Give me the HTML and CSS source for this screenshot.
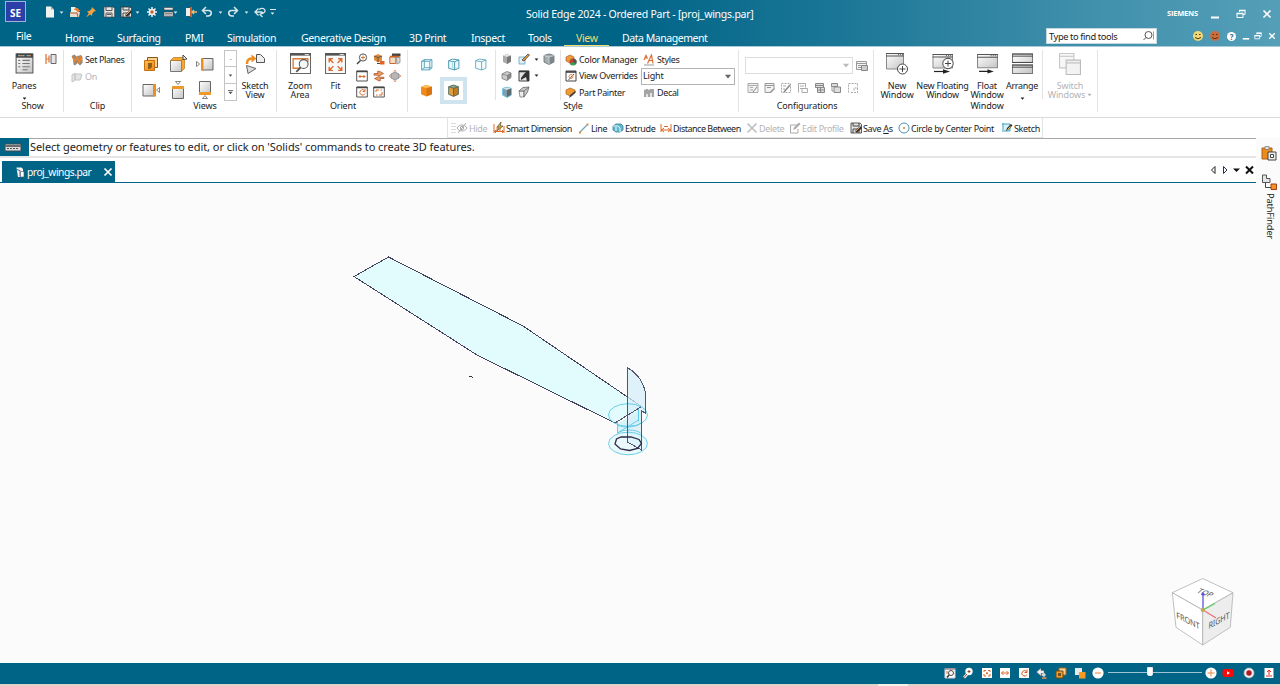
FILE: index.html
```html
<!DOCTYPE html>
<html lang="en">
<head>
<meta charset="utf-8">
<title>Solid Edge 2024</title>
<link rel="stylesheet" href="styles.css">
</head>
<body>
<svg class="sprite" aria-hidden="true">
<defs>
<linearGradient id="gr" x1="0" y1="0" x2="1" y2="1"><stop offset="0" stop-color="#fff"/><stop offset="1" stop-color="#c4c4c4"/></linearGradient>
<linearGradient id="or" x1="0" y1="0" x2="1" y2="1"><stop offset="0" stop-color="#ffc04a"/><stop offset="1" stop-color="#ee8610"/></linearGradient>
</defs>
<symbol id="caret" viewBox="0 0 6 4"><path d="M.5.5h5L3 3.5z" fill="currentColor"/></symbol>
<symbol id="doc" viewBox="0 0 12 12"><path d="M2 .5h5l3 3v8H2z" fill="#f1f1ee"/><path d="M7 .5v3h3z" fill="#9fb0b5"/></symbol>
<symbol id="open" viewBox="0 0 12 12"><path d="M2 1h4l3 3v4H2z" fill="#eee"/><path d="M1 6h10l-1 5H1z" fill="#e8dcd0"/><path d="M5 4c1-3 4-3 5 0h1.500L9 6.500 6.500 4z" fill="#f08030"/><path d="M1 7h7l1 4" stroke="#b25a30" fill="none"/></symbol>
<symbol id="pin" viewBox="0 0 12 12"><path d="M7 1l4 4-2 .5-2 2.500.2 2L5 8.500 1 11.500 3.800 7.300 2 5.200l2.300-.2L6.500 3z" fill="#f2a140"/></symbol>
<symbol id="save" viewBox="0 0 12 12"><path d="M1 1h9l1.500 1.500V11H1z" fill="#e9e7e3" stroke="#4a4a4a" stroke-width=".6"/><path d="M3 1v3.500h6V1M3 11V7h6v4M4 8.500h4" fill="none" stroke="#555"/></symbol>
<symbol id="saveas" viewBox="0 0 12 12"><path d="M1 1h9l1.500 1.500V11H1z" fill="#e9e7e3" stroke="#333" stroke-width=".8"/><path d="M3 1v3h6V1M3 11V7h6v4" fill="none" stroke="#444"/><path d="M5 9l5-5 2 2-5 5z" fill="#333"/><path d="M6 9l4-4" stroke="#eaa050"/></symbol>
<symbol id="gear" viewBox="0 0 12 12"><path d="M6 1v10M1 6h10M2.500 2.500l7 7M9.500 2.500l-7 7" stroke="#eee" stroke-width="1.500"/><circle cx="6" cy="6" r="3.300" fill="#eee"/><circle cx="6" cy="6" r="1.700" fill="#c06a30"/></symbol>
<symbol id="list" viewBox="0 0 12 12"><path d="M1 1.500h9v2.500H1zM1 6h9v4.500H1z" fill="#e8e8e8" stroke="#444" stroke-width=".6"/><path d="M2 7.500h7M2 9h7" stroke="#555" stroke-width=".7"/></symbol>
<symbol id="exit" viewBox="0 0 12 12"><path d="M1 2h5v8H1z" fill="#eee"/><path d="M5 1h2v10H5z" fill="#c6632c"/><path d="M12 6H7m2-2L7 6l2 2" stroke="#f6b877" stroke-width="1.300" fill="none"/></symbol>
<symbol id="undo" viewBox="0 0 12 12"><path d="M2 4.500h5.500c4 0 3.500 5.500-.5 5.500H5" fill="none" stroke="#d9e8ec" stroke-width="1.600"/><path d="M5 1L1.500 4.500 5 8" fill="none" stroke="#d9e8ec" stroke-width="1.500"/></symbol>
<symbol id="redo" viewBox="0 0 12 12"><path d="M10 4.500H4.500C.5 4.500 1 10 5 10h2" fill="none" stroke="#d9e8ec" stroke-width="1.600"/><path d="M7 1l3.500 3.500L7 8" fill="none" stroke="#d9e8ec" stroke-width="1.500"/></symbol>
<symbol id="undo2" viewBox="0 0 12 12"><path d="M1 6h7M4.500 2.500L1 6l3.500 3.500M5 3.500C10 .5 13 5 9.500 7L6 8.500M9 6L6 8.500 8.500 11" fill="none" stroke="#d9e8ec" stroke-width="1.300"/></symbol>
<symbol id="panes" viewBox="0 0 20 20"><path d="M2 1h16v18H2z" fill="url(#gr)" stroke="#555"/><path d="M2 .5h16v4H2z" fill="#444"/><path d="M4 2.500h2M8 2.500h2M12 2.500h2" stroke="#6bc3dd"/><path d="M6 2.500h2M14 2.500h2" stroke="#ec8840"/><path d="M4 7h2M4 10h2M4 13h2M8 7h7M8 10h7M8 13h7M8 16h5" stroke="#777"/></symbol>
<symbol id="dimbox" viewBox="0 0 12 12"><path d="M1 1v10M1 6h3M4 2.500v7" stroke="#e06d2e" fill="none" stroke-width="1.200"/><path d="M6 1.500h5v9H6z" fill="#e4e4e4" stroke="#666"/></symbol>
<symbol id="setplanes" viewBox="0 0 12 12"><path d="M.5 2l3-1.500 2 2L10 1l1.500 2v6L9 11.500 6.500 9 4 11.500l-1.500-1L2 5z" fill="#9c8774"/><path d="M1.500 3l2 4 3-4 1 6M8 9.500l1.500-6 1.500 4" stroke="#ee8428" stroke-width="1.400" fill="none"/></symbol>
<symbol id="onicon" viewBox="0 0 12 12"><path d="M1 4l3-2v7l-3 2zM4 3h6l1 1-2 5H4z" fill="#e4e4e4" stroke="#c4c4c4"/></symbol>
<symbol id="v1" viewBox="0 0 18 18"><path d="M5.500 2.500h10v10h-10z" fill="#ffd08a" stroke="#7a5a28"/><path d="M2.500 5.500h10v10h-10z" fill="url(#or)" stroke="#c87010"/><path d="M6 8h4v4l-2 2H6z" fill="#8c5e20"/></symbol>
<symbol id="v2" viewBox="0 0 18 18"><path d="M1.500 5.500h11v11h-11z" fill="url(#gr)" stroke="#777"/><path d="M1.500 5.500l3-3h11l-3 3zM12.500 5.500l3-3v11l-3 3z" fill="#f7a92f" stroke="#b7741a" stroke-width=".7"/><path d="M14 0l4 4-4 .5z" fill="#fff" stroke="#444"/></symbol>
<symbol id="v3" viewBox="0 0 18 18"><path d="M5.500 3.500h11.500v11.500H5.500z" fill="url(#gr)" stroke="#666"/><path d="M5 3h2.500V15.500H5z" fill="#ef8e20"/><path d="M.5 6.500v5l3-2.500z" fill="#fff" stroke="#666" stroke-width=".8"/></symbol>
<symbol id="v4" viewBox="0 0 18 18"><path d="M1 3.500h11.500v11.500H1z" fill="url(#gr)" stroke="#666"/><path d="M11 3h3V15.500h-3z" fill="#ef8e20"/><path d="M17.500 6.500v5l-3-2.500z" fill="#fff" stroke="#666" stroke-width=".8"/></symbol>
<symbol id="v5" viewBox="0 0 18 18"><path d="M3.500 6h11v11.500h-11z" fill="url(#gr)" stroke="#666"/><path d="M3 5h12v3H3z" fill="#ef9a28"/><path d="M6.500.5h5L9 3.500z" fill="#fff" stroke="#666" stroke-width=".8"/></symbol>
<symbol id="v6" viewBox="0 0 18 18"><path d="M3.500.5h11v12h-11z" fill="url(#gr)" stroke="#666"/><path d="M3 11h12v3H3z" fill="#ef9a28"/><path d="M6.500 17.500h5L9 14.500z" fill="#fff" stroke="#666" stroke-width=".8"/></symbol>
<symbol id="sketchview" viewBox="0 0 22 22"><path d="M12.500 1.500h4l4 4v4h-8z" fill="#eee" stroke="#555"/><path d="M3 11c0-5 2-5.500 6-5.500" stroke="#ef8e20" stroke-width="2.500" fill="none"/><path d="M7.500 1.500l5 4-5 4z" fill="#ef8e20"/><path d="M2.500 12.500l9.500 3-8 5z" fill="#ddd" stroke="#666"/></symbol>
<symbol id="zoomarea" viewBox="0 0 20 20"><path d="M.5.500h19v19H.5z" fill="#fff" stroke="#666"/><path d="M0 0h20v2.500H0z" fill="#555"/><path d="M14 1.500h4" stroke="#ddd"/><path d="M10 14.500H3v-9h14v3" stroke="#dd7a38" fill="none" stroke-width="1.300"/><circle cx="13" cy="10.500" r="4.200" fill="#eef4f6" fill-opacity=".8" stroke="#555"/><path d="M10 14l-4 4" stroke="#555" stroke-width="1.800"/></symbol>
<symbol id="fit" viewBox="0 0 20 20"><path d="M.5.500h19v19H.5z" fill="#fafafa" stroke="#666"/><path d="M0 0h20v2.500H0z" fill="#555"/><path d="M14 1.500h4" stroke="#ddd"/><path d="M4 9V5.500h3.500M12.500 5.500H16V9M16 13v3.500h-3.500M7.500 16.500H4V13M4 5.500l4 4M16 5.500l-4 4M4 16.500l4-4M16 16.500l-4-4" stroke="#dc6a2a" fill="none" stroke-width="1.300"/></symbol>
<symbol id="zoom" viewBox="0 0 12 12"><circle cx="7" cy="4.500" r="3.600" fill="#fff" stroke="#555"/><path d="M4.500 7.500L1 11" stroke="#444" stroke-width="1.500"/><path d="M5 4.500h4M7 2.500v4" stroke="#e07b35"/></symbol>
<symbol id="rot" viewBox="0 0 12 12"><path d="M1 3l4-2 4 2v4.500L5 9.500 1 7z" fill="#e08a38"/><path d="M1 3l4 1.500L9 3M5 4.500v4.500" stroke="#654" fill="none"/><path d="M4 10.500h5" stroke="#543"/><path d="M7 8h4.500v3.500H7z" fill="#e0642a"/></symbol>
<symbol id="look" viewBox="0 0 12 12"><path d="M3 .5h8.500v3H3z" fill="#444"/><path d="M.8 4h6v6.500h-6z" fill="#f6dcc4" stroke="#c8692c"/><path d="M1 3.500h9" stroke="#c8692c" stroke-width="1.500"/><path d="M7.500 4.500H11v5l-3 1.500z" fill="#ddd" stroke="#777" stroke-width=".7"/></symbol>
<symbol id="pan" viewBox="0 0 12 12"><path d="M.7 1h10.600v10H.7z" fill="#fff" stroke="#555"/><path d="M.7 1.500h10.600" stroke="#444" stroke-width="1.500"/><path d="M3 6.500h6M4.500 5L3 6.500 4.500 8M7.500 5L9 6.500 7.500 8" stroke="#dc6a2a" fill="none"/></symbol>
<symbol id="spin" viewBox="0 0 12 12"><path d="M1 3.500h4L4.500 1.500 6 1l4.500 2.500L6 6 5 5.200H1zM11 8.500H7l.5 2-1.500.5-4.500-2.500L6 6.500l1 .7h4z" fill="#eea060" stroke="#a04a24" stroke-width=".7"/></symbol>
<symbol id="prism" viewBox="0 0 12 12"><path d="M6 2l4 2v4L6 10 2 8V4z" fill="#b7b7b7" stroke="#777" stroke-width=".7"/><path d="M5 1.500L6 .3l1 1.200M5 10.500l1 1.200 1-1.200M1.500 5L.3 6l1.200 1M10.500 5l1.200 1-1.200 1" stroke="#dc6a2a" fill="none"/></symbol>
<symbol id="refresh" viewBox="0 0 12 12"><path d="M.7 1h10.600v10H.7z" fill="#fff" stroke="#555"/><path d="M.7 1.500h10.600" stroke="#444" stroke-width="1.500"/><path d="M8.500 4.500A2.700 2.700 0 1 0 9 7.500M9 3v2.500H6.500" stroke="#dc6a2a" fill="none"/></symbol>
<symbol id="prev" viewBox="0 0 12 12"><path d="M.7 1h10.600v10H.7z" fill="#fff" stroke="#555"/><path d="M.7 1.500h10.600" stroke="#444" stroke-width="1.500"/><path d="M3 6V4h3M9 6v3H6M3 9h1.500M9 4H7.500" stroke="#dc6a2a" fill="none"/></symbol>
<symbol id="wire" viewBox="0 0 12 12"><path d="M1.500 3L4 1.500h7V9L9 11H1.500zM1.500 3H9v8M9 3l2-1.500M4 1.500V9H11M4 9l-2.500 2" fill="#f2fbfd" stroke="#4a9bb4" stroke-width=".8"/></symbol>
<symbol id="wire2" viewBox="0 0 12 12"><path d="M1.500 2.500L5 1l6 .8v7.700L7 11 1.500 9.500zM1.500 2.500L7 3.500 11 1.800M7 3.500V11" fill="#edf8fb" stroke="#3c8fab" stroke-width=".8"/><path d="M5 3v6l4 .5" stroke="#8cc" stroke-width=".6" fill="none"/></symbol>
<symbol id="wire3" viewBox="0 0 12 12"><path d="M1.500 2.500L5 1l6 .8v7.700L7 11 1.500 9.500zM1.500 2.500L7 3.500 11 1.800M7 3.500V11" fill="#f6fcfd" stroke="#5aa6bd" stroke-width=".8"/></symbol>
<symbol id="ocube" viewBox="0 0 12 12"><path d="M1 2.500L6 1l5 1.500v7L6 11.500 1 9.500z" fill="#f08a18"/><path d="M1 2.500L6 1l5 1.500L6 4z" fill="#ffbb55"/><path d="M6 4v7.500l5-2v-7z" fill="#da7410"/></symbol>
<symbol id="ocube2" viewBox="0 0 12 12"><path d="M1.500 2.500L6 1l4.500 1.500v7L6 11.500 1.500 9.500z" fill="#e0a040"/><path d="M1.500 2.500L6 1l4.500 1.500L6 4z" fill="#8fa58a"/><path d="M6 4v7.500l4.500-2v-7z" fill="#c47c22"/><path d="M1.500 2.500L6 1l4.500 1.500v7L6 11.500 1.500 9.500zM1.500 2.500L6 4l4.500-1.500M6 4v7" fill="none" stroke="#4a6a60" stroke-width=".8"/></symbol>
<symbol id="gcube" viewBox="0 0 12 12"><path d="M2 2.500L6 1l4 1.500v6L6 11 2 9z" fill="#aaa"/><path d="M2 2.500L6 1l4 1.500L6 4z" fill="#e2e2e2"/><path d="M6 4v7l4-2.500v-6z" fill="#777"/></symbol>
<symbol id="dcube" viewBox="0 0 12 12"><path d="M1 2.500L6 1l5 1.500v6.500L6 11.500 1 9z" fill="#a5adb0" stroke="#5c6468" stroke-width=".8"/><path d="M6 4v7.500L11 9V2.500z" fill="#7c878c"/><path d="M1 2.500L6 4v7.500M6 4l5-1.500" stroke="#dde3e5" stroke-width=".7" fill="none"/></symbol>
<symbol id="bcube" viewBox="0 0 12 12"><path d="M1.500 2.500L6 1l4.500 1.500v6.500L6 11.500 1.500 9z" fill="#7f9fae" stroke="#6cc5de" stroke-width=".9"/><path d="M2 2.500L6 1.500l4 1L6 4z" fill="#d8e2e6"/><path d="M6 4v7l4-2.500v-6z" fill="#5c6a72"/></symbol>
<symbol id="scube" viewBox="0 0 12 12"><path d="M1 4l5-2.500 4 1.500v4.500L6 10.500 1 8.500z" fill="#ccc" stroke="#777" stroke-width=".8"/><path d="M6 5.500v5L10 7.500V3z" fill="#888"/><path d="M1 4l5 1.500L10 3" stroke="#777" stroke-width=".7" fill="none"/></symbol>
<symbol id="fcube" viewBox="0 0 12 12"><path d="M1 5h5v6H2z" fill="#eee" stroke="#777" stroke-width=".8"/><path d="M1 5l4-3.500 6-.5-1.500 5L6 11V5z" fill="#c8c8c8" stroke="#666" stroke-width=".8"/><path d="M6 5l5-4" stroke="#666" stroke-width=".8"/></symbol>
<symbol id="paint" viewBox="0 0 12 12"><path d="M1 4h6v7H1z" fill="#dff1f7" stroke="#5aa5c0" stroke-width=".8"/><path d="M4 7l6-6 1.500 1L6 8z" fill="#e19b3c" stroke="#433" stroke-width=".7"/></symbol>
<symbol id="shadow" viewBox="0 0 12 12"><path d="M1 1h10v10H1z" fill="#e4e4e4" stroke="#444"/><path d="M1 1.500h10" stroke="#333" stroke-width="1.500"/><path d="M6 4l2-2h3v9H9L8 7 3 10V8z" fill="#333"/></symbol>
<symbol id="colors" viewBox="0 0 12 12"><path d="M1 3l4-2 4 2v4L5 9 1 7z" fill="#ee9a3c" stroke="#a96322" stroke-width=".7"/><circle cx="8" cy="8" r="3.500" fill="#3a9c50"/><path d="M8 8V4.500a3.500 3.500 0 0 0-3 5z" fill="#d33a2e"/><path d="M8 8l3 2a3.500 3.500 0 0 0-3-5.500z" fill="#555"/></symbol>
<symbol id="overrides" viewBox="0 0 12 12"><path d="M1 1h10v10H1z" fill="#fff" stroke="#444"/><path d="M1 2h10" stroke="#333" stroke-width="1.500"/><path d="M3.500 10L9 4" stroke="#555"/><circle cx="6" cy="6.500" r="2" fill="none" stroke="#e08a4c"/></symbol>
<symbol id="painter" viewBox="0 0 12 12"><path d="M1 3l4-2 5 2v3L5 9 1 7z" fill="#f09a30" stroke="#a96322" stroke-width=".7"/><path d="M4 11l1-3 5-4 1 1-4 4z" fill="#444"/></symbol>
<symbol id="styles" viewBox="0 0 12 12"><path d="M1 6l2-4.500 1.500 3M2 4h2.500M4.500 9.500L8.500 1l1.500 8.500M6 6.500h4" stroke="#df6d32" stroke-width="1.200" fill="none"/><path d="M1 11h10" stroke="#999"/></symbol>
<symbol id="decal" viewBox="0 0 12 12"><path d="M1 2h10v8H1z" fill="#e2e2e2"/><path d="M2 3v7M4 2v5M6 3v7M8 2v4M10 2v8" stroke="#666"/></symbol>
<symbol id="cfg1" viewBox="0 0 12 12"><path d="M1 1.500h10v9H1zM1 3.500h10M3 5.500h3M3 8h3" fill="#f2f2f2" stroke="#aaa"/><path d="M6 10l4-5" stroke="#888"/></symbol>
<symbol id="cfg2" viewBox="0 0 12 12"><path d="M1 1.500h9V6.500L6 10.500H1zM1 3.500h9M3 5.500h4" fill="#f2f2f2" stroke="#999"/><path d="M5 11l5-5 1 1-4 4z" fill="#999"/></symbol>
<symbol id="cfg3" viewBox="0 0 12 12"><path d="M1.500 1.500h9v9h-9z" fill="none" stroke="#aaa" stroke-dasharray="2 1"/><path d="M3 4h3M3 7h2" stroke="#aaa"/><path d="M4 10l6-7" stroke="#888" stroke-width="1.500"/></symbol>
<symbol id="cfg6" viewBox="0 0 12 12"><path d="M1.500 10.500v-9h7v4M3 4h4M3 6.500h2M5 6.500h5.500v4H5z" fill="none" stroke="#aaa"/></symbol>
<symbol id="cfg7" viewBox="0 0 12 12"><path d="M1.500 1.500h8v4h-8zM3.500 5.500h7v5h-7z" fill="#ddd" stroke="#888"/><path d="M1.500 3.500h8M3.500 8h7M6.500 5.500v5" stroke="#888"/></symbol>
<symbol id="cfg4" viewBox="0 0 12 12"><path d="M1.500 1.500h6v3h-6zM4 5h6.500v5.500H4z" fill="#ddd" stroke="#888"/><path d="M2 4v5h2" stroke="#999" fill="none"/></symbol>
<symbol id="cfg5" viewBox="0 0 12 12"><path d="M1.500 10.500v-9h9v4M4 10.500h6.500V6H7v3" fill="none" stroke="#aaa" stroke-dasharray="2 1"/></symbol>
<symbol id="cfgsave" viewBox="0 0 12 12"><path d="M.5 1.500h10v8H.5zM.5 3.500h10M2 5.500h3M2 7.500h3" fill="#f4f4f4" stroke="#999"/><path d="M5.500 5.500h6v5h-6z" fill="#ccc" stroke="#888"/></symbol>
<symbol id="win" viewBox="0 0 22 22"><path d="M.5.500h17V16H.5z" fill="url(#gr)" stroke="#888"/><path d="M0 .5h18M0 3h18" stroke="#555"/><path d="M12 1.700h5" stroke="#555" stroke-dasharray="1 1"/><circle cx="16.500" cy="16" r="5" fill="#fff" stroke="#444"/><path d="M13.500 16h6M16.500 13v6" stroke="#444"/></symbol>
<symbol id="winf" viewBox="0 0 22 22"><path d="M1 1.500h19.500V15H1z" fill="url(#gr)" stroke="#888"/><path d="M.5 1.500h20.500M.5 4h20.500" stroke="#555"/><path d="M14 2.700h5" stroke="#555" stroke-dasharray="1 1"/><circle cx="16" cy="10.500" r="5.200" fill="#fff" stroke="#444"/><path d="M13 10.500h6M16 7.500v6" stroke="#444"/><path d="M2 18.500h10" stroke="#222" stroke-width="1.200"/><path d="M11 16.300l7 2.200-7 2.200z" fill="#222"/></symbol>
<symbol id="float" viewBox="0 0 20 20"><path d="M.5 1.500h19V14H.5z" fill="url(#gr)" stroke="#888"/><path d="M0 1.500h20M0 4h20" stroke="#555"/><path d="M13 2.700h5" stroke="#555" stroke-dasharray="1 1"/><path d="M2 17.500h9" stroke="#222" stroke-width="1.200"/><path d="M10 15.500l6 2-6 2z" fill="#222"/></symbol>
<symbol id="arrange" viewBox="0 0 20 20"><path d="M.5 1h19v8H.5zM.5 11.500h19v8H.5z" fill="url(#gr)" stroke="#777"/><path d="M0 1h20M0 3h20M0 9h20M0 11.500h20M0 13.500h20" stroke="#444" stroke-width=".9"/></symbol>
<symbol id="switch" viewBox="0 0 20 20"><path d="M.5.500h13v13H.5z" fill="#f7f7f7" stroke="#c8c8c8"/><path d="M.5 3h13" stroke="#c8c8c8"/><path d="M6.500 6.500h13v13h-13z" fill="#f3f3f3" stroke="#bbb"/><path d="M6.500 9h13" stroke="#bbb"/></symbol>
<symbol id="hide" viewBox="0 0 12 12"><path d="M1 6c2.500-4 7.500-4 10 0-2.500 4-7.500 4-10 0zM2 11l8-10" fill="none" stroke="#aaa"/><circle cx="6" cy="6" r="1.700" fill="none" stroke="#aaa"/></symbol>
<symbol id="sdim" viewBox="0 0 12 12"><path d="M1 2v9M11 4v7M1 9.500h10M3 8L1.500 9.500 3 11M9 8l1.500 1.500L9 11M4 10V5M7 10V6" stroke="#dc6a2a" fill="none"/><path d="M8 0L4 5h2L4 9l6-5H7.500z" fill="#e6a820" stroke="#554" stroke-width=".7"/></symbol>
<symbol id="line" viewBox="0 0 12 12"><path d="M2 10l7-7" stroke="#6aa8bc" stroke-width="1.200"/><path d="M1 9.500h2v2H1zM8.500 1.500h2v2h-2z" fill="#e78a3e"/></symbol>
<symbol id="extrude" viewBox="0 0 12 12"><path d="M1 4l3-2h5l2 2v4L8 10H4L1 8z" fill="#62b6cf" stroke="#347f99" stroke-width=".8"/><path d="M1 4h5l2 2v4M4 5v4" stroke="#eaf8fc" fill="none"/></symbol>
<symbol id="dist" viewBox="0 0 12 12"><path d="M1 2v8M11 2v8M1 8h10M4 6L1.500 8 4 10M8 6l2.500 2L8 10M4 4.500h4" stroke="#dc6a2a" fill="none"/></symbol>
<symbol id="del" viewBox="0 0 12 12"><path d="M1.500 1.500l9 9M10.500 1.500l-9 9" stroke="#bbb" stroke-width="1.500"/></symbol>
<symbol id="edit" viewBox="0 0 12 12"><path d="M8 3H1.500v8H9V7" fill="none" stroke="#aaa"/><path d="M4 8l1-2.500 5-5 1.500 1.500-5 5z" fill="#aaa"/></symbol>
<symbol id="circ" viewBox="0 0 12 12"><circle cx="6" cy="6" r="5" fill="#fff" stroke="#4f96ae"/><circle cx="6" cy="6" r="1" fill="#ec7d28"/></symbol>
<symbol id="sketch" viewBox="0 0 12 12"><path d="M1 2h8v7H3M2 1v9" fill="#d6f1f7" stroke="#3fa5c0"/><path d="M5 9l1-3 4-4 1.500 1.500-4 4z" fill="#333"/><path d="M6.500 7.500l3-3" stroke="#e9c040"/></symbol>
<symbol id="min" viewBox="0 0 10 10"><path d="M1 8.500h8" stroke="#fff" stroke-width="2"/></symbol>
<symbol id="restore" viewBox="0 0 10 10"><path d="M3.500 3V1.500h5.500v4H7.500M1 4.500h6v4H1z" fill="none" stroke="#fff"/><path d="M3 1.500h6.500M.5 4.500h7" stroke="#fff" stroke-width="1.500"/></symbol>
<symbol id="close" viewBox="0 0 10 10"><path d="M1.500 1.500l7 7M8.500 1.500l-7 7" stroke="currentColor" stroke-width="1.700"/></symbol>
<symbol id="face" viewBox="0 0 12 12"><circle cx="6" cy="6" r="5" fill="currentColor"/><path d="M3.500 4.500h1.500M7 4.500h1.500M3 7.500q3 2.500 6 0" stroke="#453a20" fill="none"/></symbol>
<symbol id="lens" viewBox="0 0 12 12"><circle cx="5.500" cy="5" r="3.500" fill="none" stroke="#555"/><path d="M3 7.500L.5 10" stroke="#555"/><path d="M10.500 1.500v8" stroke="#999"/></symbol>
<symbol id="sa" viewBox="0 0 12 12"><path d="M1 1.500h10v9.500H1z" fill="#fff" stroke="#dcd"/><path d="M1 2h10" stroke="#655"/><circle cx="7" cy="6" r="2.500" fill="#fff" stroke="#444"/><path d="M5 8l-2 2.500" stroke="#333" stroke-width="1.500"/><path d="M3 4v3" stroke="#dc6a2a"/></symbol>
<symbol id="sz" viewBox="0 0 12 12"><circle cx="7" cy="4.500" r="3.700" fill="#fff"/><path d="M5 7.500L2 10.500" stroke="#fff" stroke-width="2.500"/><path d="M5 7L2 10.500M5.500 4.500h3M7 3v3" stroke="#8a4422"/></symbol>
<symbol id="sf" viewBox="0 0 12 12"><path d="M1 1h10v10H1z" fill="#fff"/><path d="M3 5V3.500h2M7 3.500h2V5M9 7v2H7M5 9H3V7M5 5.500L7 7M7 5.500L5 7" stroke="#dc6a2a" fill="none"/></symbol>
<symbol id="sp" viewBox="0 0 12 12"><path d="M1 1h10v10H1z" fill="#fff"/><path d="M2.500 6h7M4.500 4L2.500 6l2 2M7.500 4l2 2-2 2" stroke="#dc6a2a" fill="none"/></symbol>
<symbol id="sr" viewBox="0 0 12 12"><path d="M1 1h10v10H1z" fill="#fff"/><path d="M8.500 4.500A2.700 2.700 0 1 0 9 7.500M9 2.500v3H6.500" stroke="#c85f25" fill="none"/></symbol>
<symbol id="st" viewBox="0 0 12 12"><path d="M.5 5L5 1v2.500h3v3H5V9z" fill="#f0f0f0" stroke="#666" stroke-width=".5"/><path d="M5 8l3-2.500 2 2.500-2 2z" fill="#d4d4d4"/><path d="M6 11h4.500" stroke="#e79250" stroke-width="1.500"/></symbol>
<symbol id="sq" viewBox="0 0 12 12"><path d="M4 1h7v7H4z" fill="#ffd090" stroke="#a06520"/><path d="M1 4h7v7H1z" fill="#f2a02a" stroke="#704818"/><path d="M3 6h3v3H3z" fill="#74501c"/></symbol>
<symbol id="s2" viewBox="0 0 12 12"><path d="M1 1h7v7H1z" fill="#e8e8e8"/><path d="M5 5h6.500v6.500H5z" fill="#f39b25"/></symbol>
<symbol id="minus" viewBox="0 0 12 12"><circle cx="6" cy="6" r="5.600" fill="#fff"/><path d="M3 6h6" stroke="#e58b42"/></symbol>
<symbol id="plus" viewBox="0 0 12 12"><circle cx="6" cy="6" r="5.600" fill="#fff"/><path d="M2.500 6h7M6 2.500v7" stroke="#e58b42"/></symbol>
<symbol id="yt" viewBox="0 0 12 12"><rect x=".5" y="2" width="11" height="8" rx="2" fill="#f60a0a"/><path d="M5 4.300v3.400L8 6z" fill="#fff"/></symbol>
<symbol id="rec" viewBox="0 0 12 12"><circle cx="6" cy="6" r="5" fill="#eee" stroke="#bbb" stroke-width=".6"/><circle cx="6" cy="6" r="2.700" fill="#b01822"/></symbol>
<symbol id="up" viewBox="0 0 12 12"><path d="M1.500 1h9v10h-9z" fill="#fff"/><path d="M6 8V3M4 5l2-2 2 2M3 9h6" stroke="#e02c24" fill="none"/></symbol>
<symbol id="prompt" viewBox="0 0 18 9"><path d="M1 1h16v7H1z" fill="#d9dbdc" stroke="#3c4a50"/><path d="M1.500 3h15" stroke="#222" stroke-width="1.200"/><path d="M3 5.500h12" stroke="#555" stroke-dasharray="2 1"/></symbol>
<symbol id="part" viewBox="0 0 12 12"><path d="M2.500 1.500h5L9 3v8H4z" fill="#f4f4f4"/><path d="M3 3.500l3 1v6" stroke="#345" fill="none" stroke-width=".8"/><path d="M6.500 5.500h3.500V11H6.500z" fill="#fff" stroke="#456" stroke-width=".6"/></symbol>
<symbol id="paste" viewBox="0 0 16 16"><path d="M1 2h10v11H1z" fill="#ee8c18" stroke="#a9601a"/><path d="M4 .5h4v3H4z" fill="#ddd" stroke="#777" stroke-width=".7"/><path d="M7 6h8v8H7z" fill="#eee" stroke="#444"/><path d="M9.500 8.500h3v3h-3z" fill="#fff" stroke="#444"/></symbol>
<symbol id="path" viewBox="0 0 16 16"><path d="M1.500 1h4v3.500h3.500v4H1.500z" fill="#e5e5e5" stroke="#555"/><path d="M4.500 9v4.500H10" stroke="#444" fill="none"/><path d="M10 10h5.500v5.500H10z" fill="#f19420" stroke="#a24018"/></symbol>
</svg>

<header class="head">
  <div class="title-row">
    <div class="logo">SE</div>
    <div class="quick">
      <svg class="i"><use href="#doc"/></svg><svg class="c"><use href="#caret"/></svg>
      <svg class="i"><use href="#open"/></svg><svg class="i"><use href="#pin"/></svg><svg class="i"><use href="#save"/></svg>
      <svg class="i"><use href="#saveas"/></svg><svg class="c"><use href="#caret"/></svg>
      <svg class="i"><use href="#gear"/></svg><svg class="i"><use href="#list"/></svg><svg class="c"><use href="#caret"/></svg>
      <svg class="i"><use href="#exit"/></svg><svg class="i"><use href="#undo"/></svg><svg class="c"><use href="#caret"/></svg>
      <svg class="i"><use href="#redo"/></svg><svg class="c"><use href="#caret"/></svg>
      <svg class="i"><use href="#undo2"/></svg><span class="more"><svg class="c"><use href="#caret"/></svg></span>
    </div>
    <div class="title">Solid Edge 2024 - Ordered Part - [proj_wings.par]</div>
    <div class="brand">SIEMENS</div>
    <div class="winctl"><svg class="i10"><use href="#min"/></svg><svg class="i10"><use href="#restore"/></svg><svg class="i10"><use href="#close"/></svg></div>
  </div>
  <div class="tab-row">
    <nav class="tabs"><span class="file">File</span><span>Home</span><span>Surfacing</span><span>PMI</span><span>Simulation</span><span>Generative Design</span><span>3D Print</span><span>Inspect</span><span>Tools</span><span class="on">View</span><span>Data Management</span></nav>
    <div class="search"><span>Type to find tools</span><svg class="i"><use href="#lens"/></svg></div>
    <div class="help"><svg class="i yellow"><use href="#face"/></svg><svg class="i red"><use href="#face"/></svg><span class="q">?</span><svg class="i8"><use href="#min"/></svg><svg class="i8"><use href="#restore"/></svg><svg class="i8"><use href="#close"/></svg></div>
  </div>
</header>

<section class="ribbon">
  <div class="group g-show">
    <div class="body">
      <div class="big"><svg class="i20"><use href="#panes"/></svg><span>Panes</span><svg class="c"><use href="#caret"/></svg></div>
      <svg class="i dimicon"><use href="#dimbox"/></svg>
    </div>
    <div class="label">Show</div>
  </div>
  <div class="group g-clip">
    <div class="body rows">
      <div class="cmd"><svg class="i"><use href="#setplanes"/></svg><span>Set Planes</span></div>
      <div class="cmd off"><svg class="i"><use href="#onicon"/></svg><span>On</span></div>
    </div>
    <div class="label">Clip</div>
  </div>
  <div class="group g-views">
    <div class="body">
      <div class="viewgrid"><svg class="i18"><use href="#v1"/></svg><svg class="i18"><use href="#v2"/></svg><svg class="i18"><use href="#v3"/></svg><svg class="i18"><use href="#v4"/></svg><svg class="i18"><use href="#v5"/></svg><svg class="i18"><use href="#v6"/></svg></div>
      <div class="scroll"><span class="dim">-</span><span><svg class="c"><use href="#caret"/></svg></span><span class="ml"><svg class="c"><use href="#caret"/></svg></span></div>
      <div class="big"><svg class="i22"><use href="#sketchview"/></svg><span>Sketch<br>View</span></div>
    </div>
    <div class="label">Views</div>
  </div>
  <div class="group g-orient">
    <div class="body">
      <div class="big"><svg class="i20"><use href="#zoomarea"/></svg><span>Zoom<br>Area</span></div>
      <div class="big"><svg class="i20"><use href="#fit"/></svg><span>Fit</span></div>
      <div class="grid3"><svg class="i"><use href="#zoom"/></svg><svg class="i"><use href="#rot"/></svg><svg class="i"><use href="#look"/></svg><svg class="i"><use href="#pan"/></svg><svg class="i"><use href="#spin"/></svg><svg class="i"><use href="#prism"/></svg><svg class="i"><use href="#refresh"/></svg><svg class="i"><use href="#prev"/></svg></div>
    </div>
    <div class="label">Orient</div>
  </div>
  <div class="group g-style">
    <div class="body">
      <div class="modes"><svg class="i13"><use href="#wire"/></svg><svg class="i13"><use href="#wire2"/></svg><svg class="i13"><use href="#wire3"/></svg><svg class="i13"><use href="#ocube"/></svg><span class="active"><svg class="i13"><use href="#ocube2"/></svg></span></div>
      <div class="effects"><svg class="i"><use href="#gcube"/></svg><svg class="i"><use href="#paint"/></svg><svg class="c"><use href="#caret"/></svg><svg class="i"><use href="#dcube"/></svg><svg class="i"><use href="#scube"/></svg><svg class="i"><use href="#shadow"/></svg><svg class="c"><use href="#caret"/></svg><i></i><svg class="i"><use href="#bcube"/></svg><svg class="i"><use href="#fcube"/></svg></div>
      <div class="styles">
        <div class="cmd"><svg class="i"><use href="#colors"/></svg><span>Color Manager</span></div><div class="cmd"><svg class="i"><use href="#styles"/></svg><span>Styles</span></div>
        <div class="cmd"><svg class="i"><use href="#overrides"/></svg><span>View Overrides</span></div><div class="select"><span>Light</span><svg class="c7"><use href="#caret"/></svg></div>
        <div class="cmd"><svg class="i"><use href="#painter"/></svg><span>Part Painter</span></div><div class="cmd"><svg class="i"><use href="#decal"/></svg><span>Decal</span></div>
      </div>
    </div>
    <div class="label">Style</div>
  </div>
  <div class="group g-config">
    <div class="body">
      <div class="cfgtop"><div class="select pale"><span></span><svg class="c7"><use href="#caret"/></svg></div><svg class="i"><use href="#cfgsave"/></svg></div>
      <div class="cfgrow"><svg class="i"><use href="#cfg1"/></svg><svg class="i"><use href="#cfg2"/></svg><svg class="i"><use href="#cfg3"/></svg><svg class="i"><use href="#cfg6"/></svg><svg class="i"><use href="#cfg7"/></svg><svg class="i"><use href="#cfg4"/></svg><svg class="i"><use href="#cfg5"/></svg></div>
    </div>
    <div class="label">Configurations</div>
  </div>
  <div class="group g-window">
    <div class="body">
      <div class="big"><svg class="i22"><use href="#win"/></svg><span>New<br>Window</span></div>
      <div class="big"><svg class="i22"><use href="#winf"/></svg><span>New Floating<br>Window</span></div>
      <div class="big"><svg class="i20"><use href="#float"/></svg><span>Float<br>Window</span></div>
      <div class="big"><svg class="i20"><use href="#arrange"/></svg><span>Arrange</span><svg class="c"><use href="#caret"/></svg></div>
      <div class="big off"><svg class="i22"><use href="#switch"/></svg><span>Switch<br>Windows <svg class="c5"><use href="#caret"/></svg></span></div>
    </div>
    <div class="label">Window</div>
  </div>
</section>

<div class="cmdrow">
  <div class="cmdbar">
    <div class="grip"></div>
    <div class="cmd off"><svg class="i"><use href="#hide"/></svg><span>Hide</span></div>
    <div class="cmd"><svg class="i"><use href="#sdim"/></svg><span>Smart Dimension</span></div>
    <div class="cmd"><svg class="i"><use href="#line"/></svg><span>Line</span></div>
    <div class="cmd"><svg class="i"><use href="#extrude"/></svg><span>Extrude</span></div>
    <div class="cmd"><svg class="i"><use href="#dist"/></svg><span>Distance Between</span></div>
    <div class="cmd off"><svg class="i"><use href="#del"/></svg><span>Delete</span></div>
    <div class="cmd off"><svg class="i"><use href="#edit"/></svg><span>Edit Profile</span></div>
    <div class="cmd"><svg class="i"><use href="#saveas"/></svg><span>Save <u>A</u>s</span></div>
    <div class="cmd"><svg class="i"><use href="#circ"/></svg><span>Circle by Center Point</span></div>
    <div class="cmd"><svg class="i"><use href="#sketch"/></svg><span>Sketch</span></div>
  </div>
</div>

<main class="work">
  <div class="pane">
    <div class="prompt"><div class="pi"><svg class="i18x9"><use href="#prompt"/></svg></div><div class="msg">Select geometry or features to edit, or click on 'Solids' commands to create 3D features.</div></div>
    <div class="doctabs">
      <div class="doctab"><svg class="i"><use href="#part"/></svg><span>proj_wings.par</span><svg class="i10"><use href="#close"/></svg></div>
      <svg class="nav" viewBox="0 0 44 12"><path d="M5 2.500v7L1.500 6z" fill="#fff" stroke="#222"/><path d="M13.500 2.500v7L17 6z" fill="#fff" stroke="#235"/><path d="M23 4.500h7L26.500 8z" fill="#111"/><path d="M36 2.500l7 7M43 2.500l-7 7" stroke="#111" stroke-width="2"/></svg>
    </div>
    <svg class="canvas" viewBox="0 183 1256 480">
      <g shape-rendering="crispEdges">
      <path d="M354 276.500L388.500 257 523 326 641.500 406.500 615 423 477 355z" fill="#e2fbfc" stroke="#45415c" stroke-width="1"/>
      <path d="M469 376.500l2 0 2 1" stroke="#333" fill="none"/>
      <path d="M617.500 423v10l24-12v-9z" fill="#c9f1fb" fill-opacity=".7"/>
      <path d="M627.500 367.500c10 5 17 17 18 28v17l-4-1v39l-14-8z" fill="#d5edf8" fill-opacity=".75"/>
      </g>
      <g fill="none" stroke="#5cc8e6" stroke-width=".9">
        <ellipse cx="628" cy="415" rx="19.500" ry="11.300"/>
        <ellipse cx="628" cy="443.500" rx="19.500" ry="11.300" fill="#dff8fd" fill-opacity=".6"/>
        <path d="M617.500 422v11l21-13v-11M617.500 433c6-4 18-4 23 0M617 425c6 3 18 3 24-2M638.500 409.500v12"/>
      </g>
      <path d="M627.500 367.500V442l14 8V411l4 2v-20c-2-11-9-20-18-25.500M615 423l26.500-16.500" fill="none" stroke="#55536e" stroke-width="1" shape-rendering="crispEdges"/>
      <path d="M621 437h10l8 2.500 2.500 4-4 5-8 2-9-1.500-5.500-5 1.500-5z" fill="none" stroke="#2b2b45" stroke-width="1.300"/>
      <g stroke="#b0b0b0" stroke-width=".8">
        <path d="M1202.700 578.500L1233 592.700 1202.700 610 1172.300 592.700z" fill="#fff"/>
        <path d="M1172.300 592.700L1202.700 610V645L1176 627.300z" fill="#fff"/>
        <path d="M1233 592.700L1202.700 610V645L1230.300 627.300z" fill="#ededed"/>
      </g>
      <g class="face">
        <text transform="matrix(.88 .43 .08 1.050 1176.500 618)">FRONT</text>
        <text transform="matrix(.86 -.45 -.02 1.050 1208.500 629)">RIGHT</text>
        <text transform="matrix(.9 .32 -.75 .72 1196 592.500)">TOP</text>
      </g>
      <path d="M1203 610l12-6.500" stroke="#5fce62" stroke-width="1.300"/>
      <path d="M1203 610l13 8" stroke="#ea7070" stroke-width="1.300"/>
      <path d="M1203 610v-17m-1.500 2l1.500-2 1.500 2" stroke="#5b55e0" stroke-width="1.300" fill="none"/>
      <circle cx="1202.700" cy="610" r="2" fill="#c2a64c"/>
    </svg>
  </div>
  <aside class="side"><svg class="i16"><use href="#paste"/></svg><svg class="i16"><use href="#path"/></svg><span>PathFinder</span></aside>
</main>

<footer class="status">
  <div class="sicons"><svg class="i"><use href="#sa"/></svg><svg class="i"><use href="#sz"/></svg><svg class="i"><use href="#sf"/></svg><svg class="i"><use href="#sp"/></svg><svg class="i"><use href="#sr"/></svg><svg class="i"><use href="#st"/></svg><svg class="i"><use href="#sq"/></svg><svg class="i"><use href="#s2"/></svg></div>
  <svg class="i"><use href="#minus"/></svg>
  <div class="slider"><span class="thumb"></span></div>
  <svg class="i"><use href="#plus"/></svg>
  <div class="rec"><svg class="i"><use href="#yt"/></svg><svg class="i"><use href="#rec"/></svg><svg class="i"><use href="#up"/></svg></div>
</footer>
<div class="strip"><span></span></div>
</body>
</html>
```

FILE: styles.css
```css
* { box-sizing: border-box; }
body { margin: 0; width: 1280px; height: 686px; overflow: hidden; display: flex; flex-direction: column; background: #fff; color: #1c1c24; font-family: "Noto Sans", "Open Sans", sans-serif; font-size: 9px; letter-spacing: -.15px; line-height: 12px; }
.sprite { position: absolute; width: 0; height: 0; }
svg { display: block; flex: none; }
.i { width: 12px; height: 12px; }
.i8 { width: 8px; height: 8px; }
.i10 { width: 10px; height: 10px; }
.i13 { width: 13px; height: 13px; }
.i16 { width: 16px; height: 16px; }
.i18 { width: 18px; height: 18px; }
.i20 { width: 21px; height: 21px; }
.i22 { width: 22px; height: 22px; }
.i18x9 { width: 18px; height: 9px; }
.c { width: 5px; height: 3px; }
.c5 { width: 5px; height: 4px; display: inline-block; vertical-align: 1px; }
.c7 { width: 8px; height: 5px; color: #666; }

.head { height: 47px; flex: none; background: linear-gradient(90deg, #006487 0, #006487 620px, #1e7898 860px, #3f8fab 1080px, #559fb8 1280px); border-bottom: 1px solid #a9cbd8; color: #fff; }
.title-row { height: 28px; display: flex; }
.logo { width: 21px; height: 21px; margin: 1px 18px 0 5px; background: #2b3fa8; border: 1px solid #9fb2d8; font: bold 10px/23px "Open Sans", sans-serif; text-align: center; }
.quick { width: 240px; height: 24px; display: grid; align-items: center; grid-template-columns: 15px 10px 16px 18px 17px 15px 11px 17px 10px 12px 16px 17px 9px 17px 10px 16px 14px; color: #dfeaee; }
.more { border-top: 1px solid #dfeaee; padding-top: 2px; width: 6px; }
.title { width: 246px; margin-left: 242px; line-height: 28px; font-size: 10.500px; letter-spacing: -.25px; white-space: nowrap; }
.brand { width: 48px; margin-left: 395px; font: bold 7.500px/27px "Open Sans", sans-serif; letter-spacing: -.2px; }
.winctl { display: flex; gap: 16px; padding-top: 9px; margin-left: -5px; }
.tab-row { height: 18px; display: flex; }
.tabs { width: 1046px; padding-left: 16px; display: grid; grid-template-columns: 49px 52px 68px 42px 74px 108px 62px 57px 36px 58px 100px; font-size: 10.500px; letter-spacing: -.35px; line-height: 20px; white-space: nowrap; }
.tabs .file { line-height: 17px; }
.tabs .on { width: 45px; height: 18px; padding-left: 12px; color: #f2dc75; border-bottom: 1px solid #f2dc75; }
.tabs span:last-child { letter-spacing: -.45px; }
.search { width: 111px; height: 16px; background: #fff; border: 1px solid #c4d8df; display: flex; justify-content: space-between; align-items: center; padding: 1px 1px 0 2px; color: #222; font-size: 9.300px; letter-spacing: -.4px; }
.search .i { margin-top: -2px; }
.help { display: grid; grid-template-columns: 17px 18px 15px 12px 14px 9px; padding-left: 35px; align-items: center; height: 16px; }
.yellow { color: #f0d774; }
.red { color: #cf6b3a; }
.q { width: 9px; height: 9px; border-radius: 50%; background: #fff; color: #2b6f9a; font: bold 8px/9px "Open Sans", sans-serif; text-align: center; }

.ribbon { height: 71px; flex: none; display: flex; border-bottom: 1px solid #d9d9d9; }
.group { border-right: 1px solid #e3e3e3; height: 62px; margin-top: 3px; flex: none; }
.body { display: flex; height: 49px; }
.label { text-align: center; line-height: 13px; }
.big { display: flex; flex-direction: column; align-items: center; padding-top: 3px; text-align: center; line-height: 9.300px; white-space: nowrap; }
.big > span { margin-top: 7px; }
.big .i22 { margin-bottom: -1px; }
.big > .c { margin-top: 7px; }
.off { color: #b4b4b8; }
.cmd { display: flex; align-items: center; white-space: nowrap; gap: 2px; letter-spacing: -.35px; }
.g-show { width: 64px; }
.g-show .big { width: 48px; }
.dimicon { margin: 3px 0 0 -3px; }
.g-show .label { padding-left: 2px; }
.g-clip { width: 68px; }
.g-clip .body { flex-direction: column; padding: 1px 0 0 7px; height: 49px; }
.g-clip .cmd { height: 16.500px; padding-top: 2px; letter-spacing: -.4px; }
.g-views { width: 145px; }
.viewgrid { display: grid; grid-template-columns: 27px 27px 27px; grid-template-rows: 26px 26px; margin: 1px 0 0 5px; height: 52px; width: 87px; place-items: center; }
.scroll { width: 13px; height: 51px; border: 1px solid #c4c4c4; display: grid; grid-template-rows: 16px 17px 16px; }
.scroll span { display: grid; place-items: center; border-bottom: 1px solid #c4c4c4; color: #555; }
.scroll .dim { color: #aaa; }
.scroll .ml { border-bottom: 0; }
.scroll .ml .c { border-top: 1px solid #777; height: 5px; }
.g-views .big { width: 36px; }
.g-views .label { padding-left: 2px; }
.g-orient { width: 131px; }
.g-orient .big { width: 46px; }
.g-orient .big + .big { width: 25px; }
.grid3 { width: 50px; display: grid; grid-template-columns: repeat(3, 16.500px); grid-template-rows: repeat(3, 16.500px); place-items: center; padding-left: 6px; padding-top: 1px; }
.g-orient .label { padding-left: 2px; }
.g-style { width: 331px; }
.modes { width: 88px; padding: 1px 0 0 5px; display: grid; grid-template-columns: 27px 27px 27px; grid-template-rows: 26px 27px; place-items: center; border-right: 1px solid #e3e3e3; height: 50px; }
.active { width: 27px; height: 27px; display: grid; place-items: center; background: #fff; border: 4px solid #cfe4ee; }
.effects { width: 65px; height: 50px; display: grid; grid-template-columns: 17px 17px 8px 18px; grid-template-rows: repeat(3, 16.500px); place-items: center; padding-left: 2px; padding-top: 1px; border-right: 1px solid #e3e3e3; }
.styles { width: 177px; display: grid; grid-template-columns: 76px 94px; grid-template-rows: repeat(3, 16.500px); padding: 1.500px 0 0 4px; }
.styles .cmd:nth-child(2n) { padding-left: 2px; }
.select { display: flex; justify-content: space-between; align-items: center; border: 1px solid #b5b5b5; height: 17px; padding: 0 2px 0 1px; margin-top: -.5px; }
.g-config { width: 135px; }
.g-config .body { flex-direction: column; padding: 7px 0 0 6px; }
.g-config .label { padding-left: 2px; }
.cfgtop { display: flex; align-items: center; gap: 3px; height: 17px; }
.pale { width: 108px; border-color: #ddd; }
.pale .c7 { color: #bbb; }
.cfgrow { display: flex; gap: 4.700px; padding: 8px 0 0 2px; }
.g-window { width: 224px; }
.g-window .big:nth-child(1) { width: 46px; }
.g-window .big:nth-child(2) { width: 45px; letter-spacing: -.25px; }
.g-window .big:nth-child(3) { width: 44px; }
.g-window .big:nth-child(4) { width: 34px; padding-right: 7px; border-right: 1px solid #e3e3e3; letter-spacing: -.3px; }
.g-window .big:nth-child(5) { width: 54px; }
.g-window .label { width: 226px; }

.cmdrow { height: 20px; flex: none; padding-left: 447px; }
.cmdbar { width: 596px; height: 20px; border: 1px solid #e3e3e3; border-top: 0; display: grid; grid-template-columns: 9px 37px 85px 34px 48px 86px 43px 61px 48px 103px 38px; align-items: center; padding-top: 1px; }
.cmdbar .cmd { gap: 1px; margin-left: -1px; }
.cmdbar .cmd span { padding-top: 1px; }
.cmdbar .cmd:nth-child(3) span { letter-spacing: -.5px; }
.cmdbar .cmd:nth-child(6) span { letter-spacing: -.5px; }
.grip { width: 5px; height: 12px; margin-left: 3px; background: radial-gradient(circle, #c9c9c9 .7px, transparent 1px) 0 0 / 2.500px 3px; }

.work { height: 525px; flex: none; display: flex; }
.pane { width: 1256px; }
.prompt { height: 20px; display: flex; border-top: 1px solid #a7a7a7; border-bottom: 2px solid #e6e6e6; }
.pi { width: 29px; background: #006487; padding: 5px 0 0 4px; margin-top: -1px; }
.msg { font-size: 11px; line-height: 16px; padding-left: 1px; letter-spacing: -.065px; white-space: nowrap; }
.doctabs { height: 25px; display: flex; justify-content: space-between; border-bottom: 1px solid #006487; padding: 3px 2px 0 2px; }
.doctab { width: 113px; background: #006487; color: #fff; display: flex; align-items: center; padding-left: 12px; font-size: 10.300px; letter-spacing: -.5px; gap: 1px; }
.doctab span { width: 75px; }
.nav { width: 44px; height: 12px; margin-top: 3px; }
.canvas { width: 1256px; height: 480px; background: #fbfbfb; }
.face { font-family: "Noto Sans", sans-serif; font-size: 8.300px; letter-spacing: -.1px; fill: #555; }
.side { width: 24px; padding: 8px 0 0 5px; background: #fbfbfb; display: flex; flex-direction: column; }
.side .i16 + .i16 { margin-top: 12px; }
.side span { writing-mode: vertical-rl; margin: 3px 0 0 1px; line-height: 16px; font-size: 9.300px; align-self: flex-start; }

.status { height: 21px; flex: none; background: #006487; display: flex; align-items: center; padding: 0 5px 2px 944px; }
.sicons { display: flex; gap: 6.600px; width: 149px; margin-left: -.5px; }
.slider { width: 95px; height: 1px; margin: 0 3px 0 4px; background: #9fc5d2; display: flex; justify-content: center; align-items: center; }
.thumb { width: 6px; height: 9px; background: #fff; border: 1px solid #dfe8ec; margin-left: -10px; margin-top: -2px; flex: none; border-radius: 0 0 2px 2px; }
.rec { display: grid; grid-template-columns: 21px 20px 12px; margin-left: 5px; }
.strip { height: 2px; background: #dfd3c9; padding-left: 878px; }
.strip span { display: block; width: 30px; height: 2px; background: #f4f0ea; }
```
